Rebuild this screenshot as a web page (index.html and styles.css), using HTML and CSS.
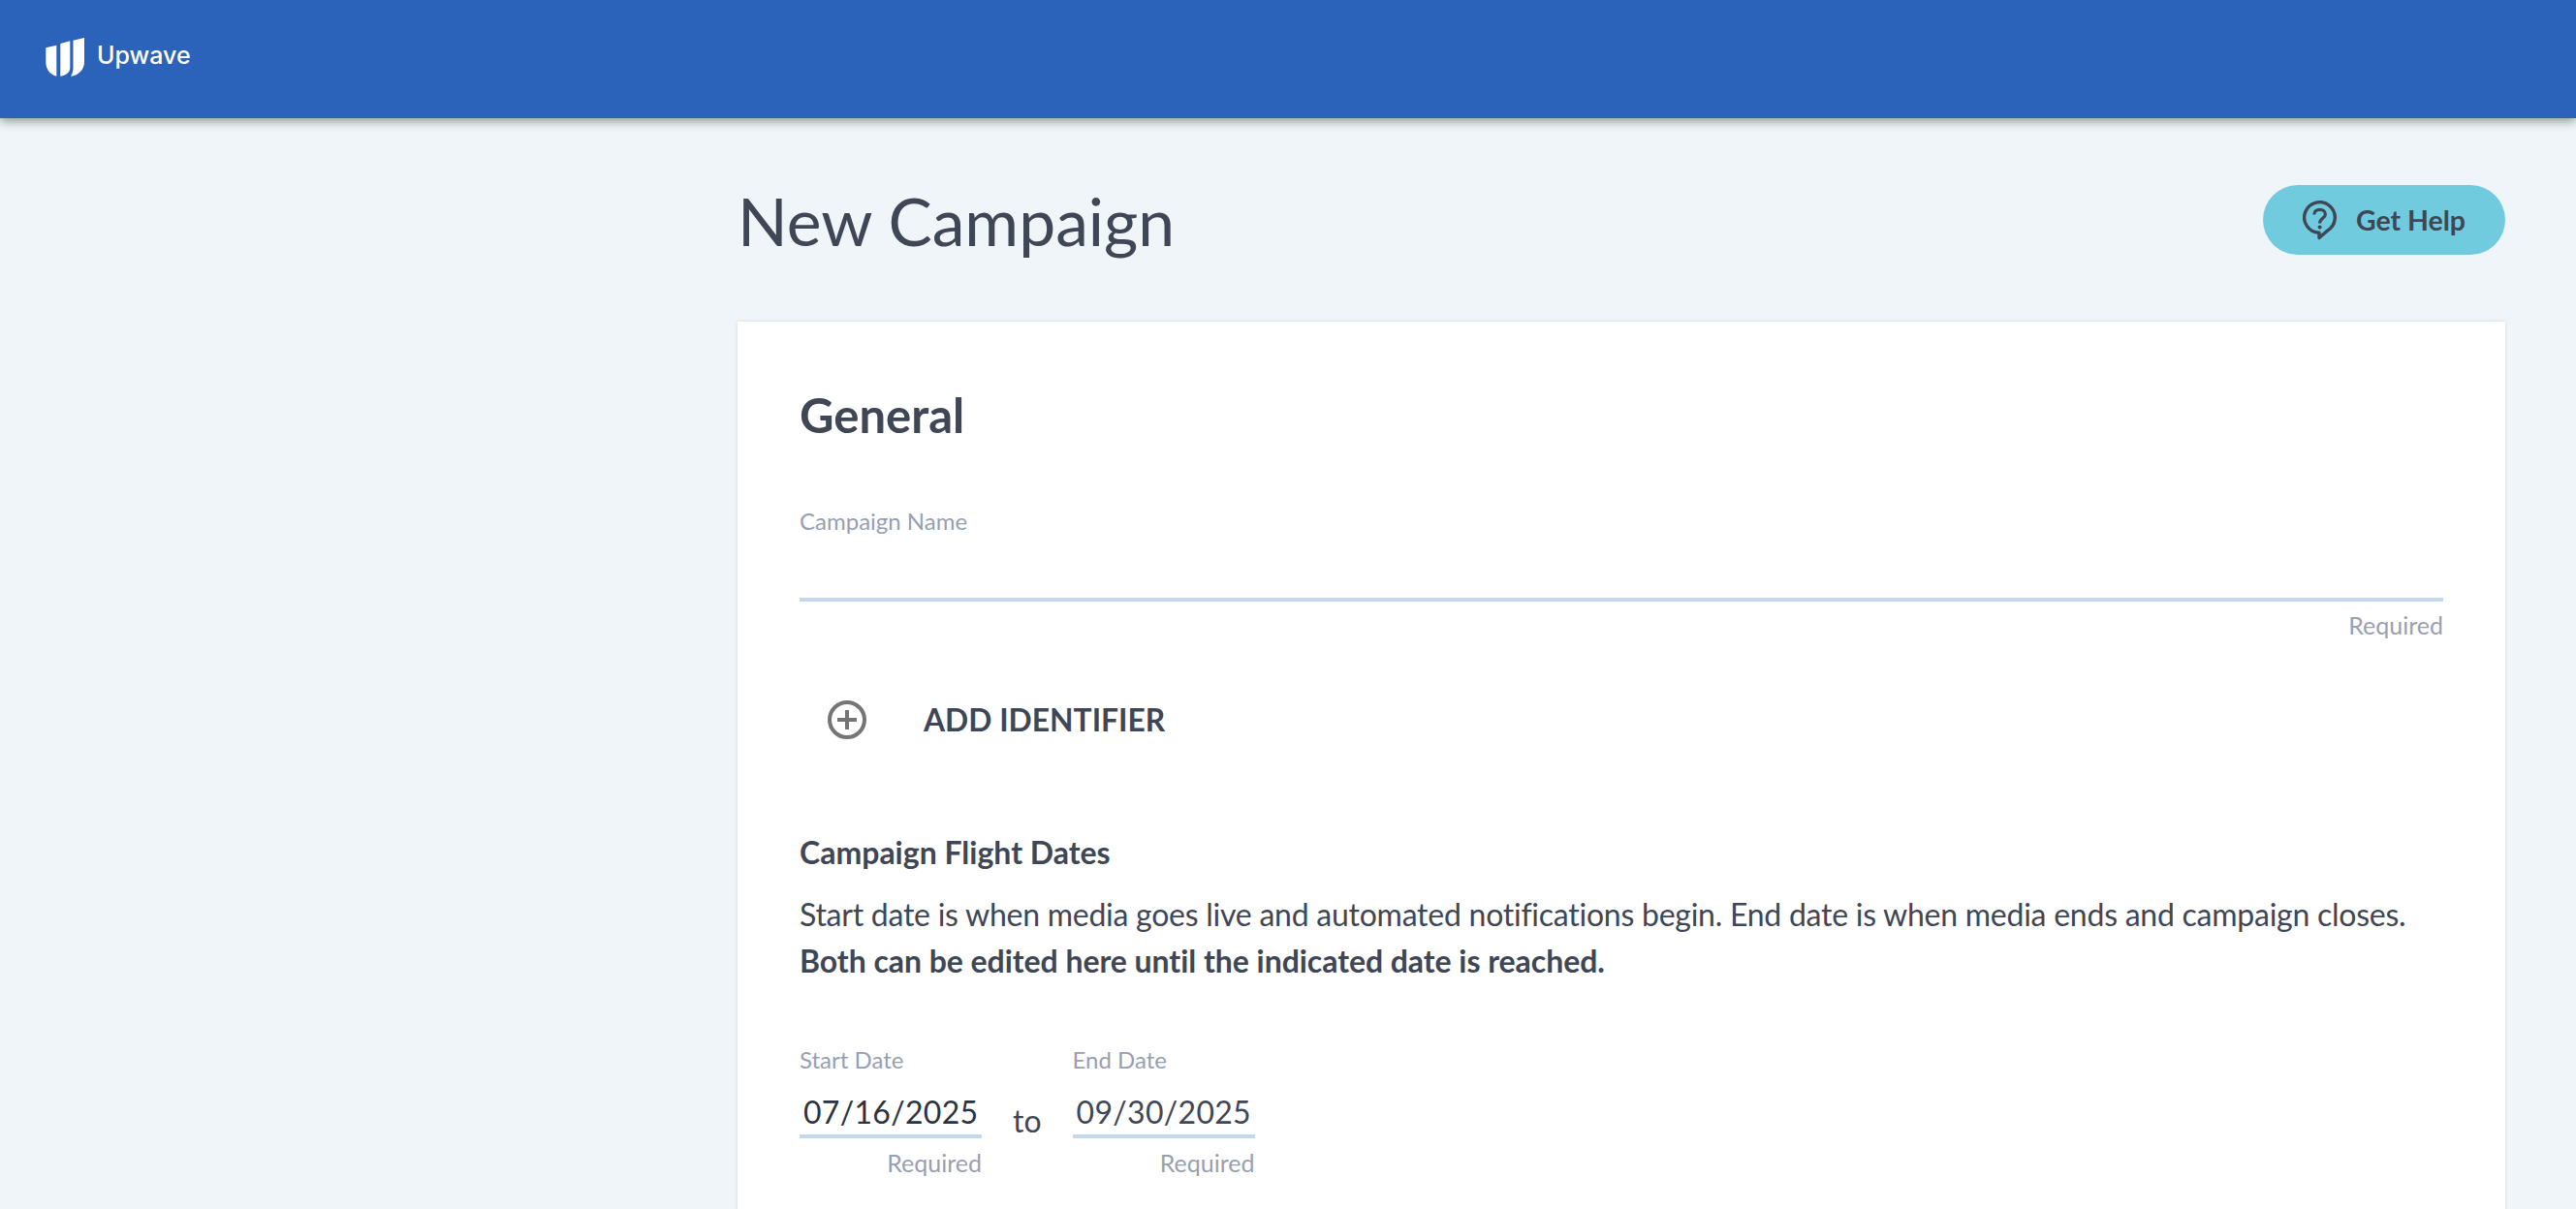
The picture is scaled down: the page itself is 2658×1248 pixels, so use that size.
FILE: index.html
```html
<!DOCTYPE html>
<html lang="en">
  <head>
    <meta charset="UTF-8" />
    <title>New Campaign</title>
    <link rel="stylesheet" href="styles.css">
  </head>
  <body>
    <header class="topbar">
      <svg class="logo-mark" viewBox="0 0 40 40" width="40" height="40">
        <path d="M0.3 10.3 L11.3 7.7 V39.7 C5 38 0.3 33 0.3 25 Z" fill="#fff" />
        <path d="M15.3 6 L25.3 3.2 V31 C25.3 35 22 38.5 15.3 39.7 Z" fill="#fff" />
        <path d="M28.5 2.7 L40 0 V25 C40 33 34 39 26 39.7 C28 37 28.5 33 28.5 31 Z" fill="#fff" />
      </svg>
      <span class="logo-text">Upwave</span>
    </header>

    <main class="content">
      <div class="page-head">
        <h1>New Campaign</h1>
        <button class="help-btn">
          <svg viewBox="0 0 35 41" width="35" height="41">
            <path d="M25 31.4 L17 38.5 V33.3 A15.8 15.8 0 1 1 25 31.4 Z" fill="none" stroke="#3f4756" stroke-width="3.4" stroke-linejoin="round" />
            <path d="M11.8 14.5 C11.8 7.6 23.4 7.6 23.4 14.2 C23.4 18.4 17.6 18.4 17.6 23.4" fill="none" stroke="#3f4756" stroke-width="3.2" />
            <circle cx="17.6" cy="27.6" r="2" fill="#3f4756" />
          </svg>
          Get Help
        </button>
      </div>

      <section class="card">
        <h2>General</h2>

        <div class="field">
          <label class="field-label">Campaign Name</label>
          <div class="field-input"></div>
          <div class="field-hint">Required</div>
        </div>

        <div class="add-row">
          <svg viewBox="0 0 40 40" width="40" height="40">
            <circle cx="20" cy="20" r="18" fill="none" stroke="#757575" stroke-width="4" />
            <path d="M20 10 V30 M10 20 H30" stroke="#757575" stroke-width="4" />
          </svg>
          <span>ADD IDENTIFIER</span>
        </div>

        <h3>Campaign Flight Dates</h3>
        <p class="flight-text">
          Start date is when media goes live and automated notifications begin. End date is when media ends and campaign closes.
          <strong>Both can be edited here until the indicated date is reached.</strong>
        </p>

        <div class="date-row">
          <div class="date-field">
            <label class="field-label">Start Date</label>
            <div class="date-input dark">07/16/2025</div>
            <div class="field-hint">Required</div>
          </div>
          <span class="date-to">to</span>
          <div class="date-field">
            <label class="field-label">End Date</label>
            <div class="date-input">09/30/2025</div>
            <div class="field-hint">Required</div>
          </div>
        </div>
      </section>
    </main>
  </body>
</html>
```

FILE: styles.css
```css
html,
body {
  height: 100%;
}

body {
  margin: 0;
  background-color: #f0f5f9;
  font-family: Lato, "Liberation Sans", sans-serif;
  color: #3f4756;
  overflow: hidden;
}

.topbar {
  display: flex;
  align-items: center;
  gap: 13px;
  height: 122px;
  padding: 0 0 4px 47px;
  box-sizing: border-box;
  background-color: #2a63b9;
  box-shadow: 0 3px 10px rgba(0, 0, 0, 0.4);
}

.logo-text {
  margin-bottom: 4px;
  font-family: Inter, sans-serif;
  font-size: 25px;
  font-weight: 500;
  color: white;
}

.content {
  width: 1824px;
  margin-left: 761px;
}

.page-head {
  display: flex;
  justify-content: space-between;
  align-items: center;
  height: 210px;
}

h1 {
  margin: 0;
  font-size: 67.8px;
  font-weight: 400;
  color: #3f4756;
}

.help-btn {
  display: flex;
  align-items: center;
  justify-content: center;
  gap: 20px;
  width: 250px;
  height: 72px;
  padding: 0;
  border: none;
  border-radius: 36px;
  background-color: #70cbdf;
  font-family: inherit;
  font-size: 28.5px;
  font-weight: bold;
  color: #3f4756;
}

.card {
  padding: 64px;
  height: 1000px;
  box-sizing: border-box;
  background: white;
  box-shadow: 0 0 4px rgba(0, 0, 0, 0.12);
}

h2 {
  margin: 0;
  font-size: 49px;
  line-height: 64px;
  font-weight: bold;
}

.field {
  margin-top: 62px;
}

.field-label {
  display: block;
  font-size: 24px;
  line-height: 32px;
  color: #979fb3;
}

.field-input {
  height: 63px;
  border-bottom: 4px solid #c4d7ec;
}

.field-hint {
  margin-top: 8px;
  font-size: 25px;
  line-height: 32px;
  text-align: right;
  color: #979fb3;
}

.add-row {
  display: flex;
  align-items: center;
  margin-top: 62px;
  padding-left: 29px;
  gap: 59px;
  font-size: 31.8px;
  font-weight: bold;
}

h3 {
  margin: 93px 0 0;
  font-size: 32px;
  line-height: 48px;
  font-weight: bold;
}

.flight-text {
  margin: 16px 0 0;
  font-size: 32px;
  line-height: 48px;
  letter-spacing: -0.25px;
}

.flight-text strong {
  letter-spacing: -0.05px;
}

.date-row {
  display: flex;
  align-items: flex-start;
  gap: 32px;
  margin-top: 62px;
}

.date-field {
  width: 188px;
}

.date-input {
  height: 44px;
  padding: 17px 0 0 4px;
  font-size: 32px;
  letter-spacing: 0.3px;
  line-height: 42px;
  border-bottom: 4px solid #c4d7ec;
}

.date-input + .field-hint {
  margin-top: 9px;
}

.date-input.dark {
  color: #2c3340;
}

.date-to {
  margin-top: 60px;
  font-size: 32px;
  line-height: 38px;
}
```
